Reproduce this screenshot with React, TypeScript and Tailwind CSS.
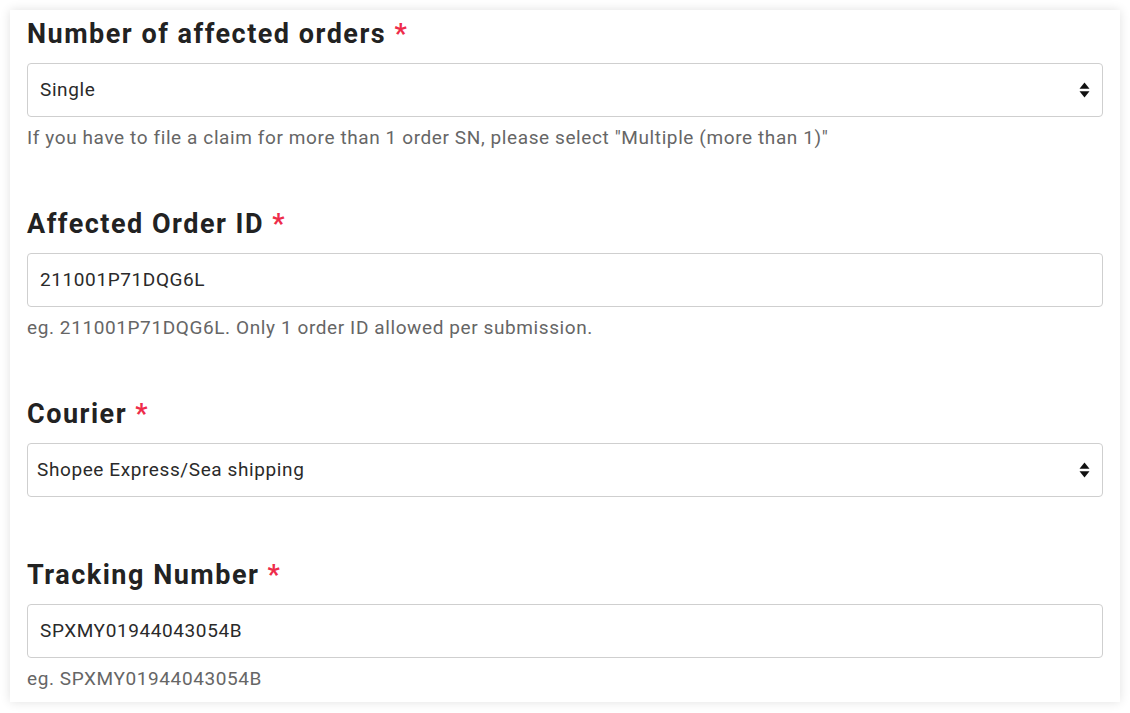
import React from "react";

const Arrows = () => (
  <svg width="11" height="16" viewBox="0 0 11 16" className="shrink-0">
    <path d="M5.5 0.5 L10.5 6.8 L0.5 6.8 Z" fill="#111" />
    <path d="M5.5 15.5 L10.5 9.2 L0.5 9.2 Z" fill="#111" />
  </svg>
);

function Label({ text }: { text: string }) {
  return (
    <div className="text-[27px] leading-[36px] font-bold text-[#222] tracking-[1.5px]">
      {text} <span className="text-[#ee2c4a]">*</span>
    </div>
  );
}

function Field({ value, select, pl = "pl-[12px]" }: { value: string; select?: boolean; pl?: string }) {
  return (
    <div
      className={`mt-[11px] h-[54px] border border-[#cfcfcf] rounded-[4px] bg-white flex items-center ${pl} pr-[12px] text-[19px] tracking-[0.6px] text-[#2a2a2a]`}
    >
      <span className="flex-1">{value}</span>
      {select && <Arrows />}
    </div>
  );
}

function Helper({ text }: { text: string }) {
  return <div className="mt-[8px] text-[19px] leading-[26px] tracking-[0.6px] text-[#666]">{text}</div>;
}

export default function App() {
  return (
    <div className="w-[1130px] h-[713px] bg-white p-[10px] overflow-hidden" style={{ fontFamily: "Roboto, 'Liberation Sans', sans-serif" }}>
      <div className="h-[692px] bg-white shadow-[0_0_10px_rgba(0,0,0,0.12)] px-[17px] pt-[6px]">
        <div>
          <Label text="Number of affected orders" />
          <Field value="Single" select />
          <Helper text={'If you have to file a claim for more than 1 order SN, please select "Multiple (more than 1)"'} />
        </div>
        <div className="mt-[55px]">
          <Label text="Affected Order ID" />
          <Field value="211001P71DQG6L" />
          <Helper text="eg. 211001P71DQG6L. Only 1 order ID allowed per submission." />
        </div>
        <div className="mt-[55px]">
          <Label text="Courier" />
          <Field value="Shopee Express/Sea shipping" select pl="pl-[9px]" />
        </div>
        <div className="mt-[60px]">
          <Label text="Tracking Number" />
          <Field value="SPXMY01944043054B" />
          <Helper text="eg. SPXMY01944043054B" />
        </div>
      </div>
    </div>
  );
}
